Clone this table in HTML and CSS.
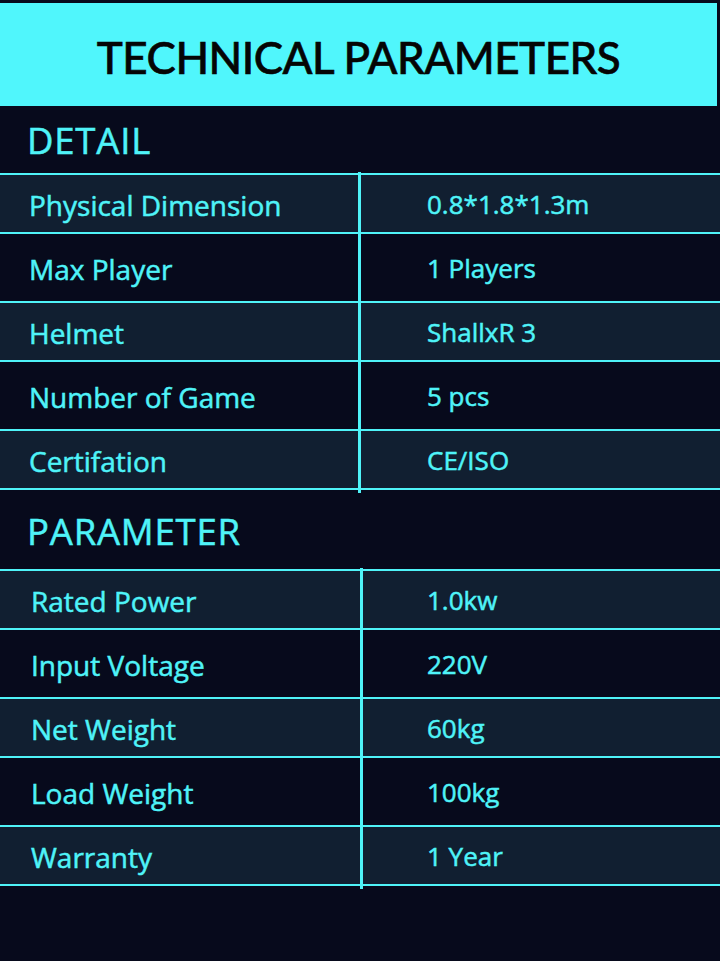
FILE: index.html
```html
<!DOCTYPE html>
<html lang="en">
<head>
<meta charset="utf-8">
<title>Technical Parameters</title>
<link rel="stylesheet" href="styles.css">
</head>
<body>
<div class="page">
  <header class="banner"><h1 class="banner-title">TECHNICAL PARAMETERS</h1></header>

  <h2 class="section-title section-title--first">DETAIL</h2>
  <div class="spec-table">
    <div class="spec-row spec-row--light"><div class="spec-label">Physical Dimension</div><div class="spec-value">0.8*1.8*1.3m</div></div>
    <div class="spec-row spec-row--dark"><div class="spec-label">Max Player</div><div class="spec-value">1 Players</div></div>
    <div class="spec-row spec-row--light"><div class="spec-label">Helmet</div><div class="spec-value">ShallxR 3</div></div>
    <div class="spec-row spec-row--dark"><div class="spec-label">Number of Game</div><div class="spec-value">5 pcs</div></div>
    <div class="spec-row spec-row--light"><div class="spec-label">Certifation</div><div class="spec-value">CE/ISO</div></div>
  </div>

  <h2 class="section-title section-title--second">PARAMETER</h2>
  <div class="spec-table spec-table--shifted">
    <div class="spec-row spec-row--light"><div class="spec-label">Rated Power</div><div class="spec-value">1.0kw</div></div>
    <div class="spec-row spec-row--dark"><div class="spec-label">Input Voltage</div><div class="spec-value">220V</div></div>
    <div class="spec-row spec-row--light"><div class="spec-label">Net Weight</div><div class="spec-value">60kg</div></div>
    <div class="spec-row spec-row--dark"><div class="spec-label">Load Weight</div><div class="spec-value">100kg</div></div>
    <div class="spec-row spec-row--light"><div class="spec-label">Warranty</div><div class="spec-value">1 Year</div></div>
  </div>
</div>
</body>
</html>
```

FILE: styles.css
```css
* { box-sizing: border-box; }

html, body {
  margin: 0;
  padding: 0;
  background: #070a1c;
}

body {
  font-family: "Open Sans", Lato, Arial, sans-serif;
  color: #4ff3f8;
  width: 720px;
  min-height: 961px;
}

.page {
  padding-top: 3px;
}

.banner {
  background: #50f6fc;
  height: 103px;
  margin-right: 3px;
  display: flex;
  align-items: center;
  justify-content: center;
}

.banner-title {
  margin: 0;
  font-family: Lato, "Open Sans", Arial, sans-serif;
  font-size: 44px;
  font-weight: 500;
  color: #050505;
  letter-spacing: -0.5px;
  padding-top: 4px;
  -webkit-text-stroke: 0.6px #050505;
}

.section-title {
  margin: 0;
  font-weight: 500;
  font-size: 36.5px;
  letter-spacing: 0.8px;
  color: #4ff3f8;
  padding-left: 27px;
  display: flex;
  align-items: center;
  -webkit-text-stroke: 0.5px #4ff3f8;
}

.section-title--first { height: 67px; }
.section-title--second { height: 79px; padding-top: 3px; }

.spec-table {
  position: relative;
  border-top: 2px solid #4ff3f8;
}

.spec-table::after {
  content: "";
  position: absolute;
  left: 358px;
  top: -3px;
  bottom: -3px;
  width: 3px;
  background: #4ff3f8;
}

.spec-table--shifted::after { left: 360px; }

.spec-row {
  display: grid;
  grid-template-columns: 361px 1fr;
  align-items: center;
  border-bottom: 2px solid #4ff3f8;
  font-weight: 500;
  -webkit-text-stroke: 0.5px #4ff3f8;
}

.spec-row--light { background: #111f31; height: 59px; }
.spec-row--dark { background: #070a1c; height: 69px; }

.spec-label {
  padding-left: 29px;
  padding-top: 2px;
  font-size: 28px;
}

.spec-table--shifted .spec-label { padding-left: 31px; }

.spec-value {
  padding-left: 66px;
  font-size: 26px;
}
```
